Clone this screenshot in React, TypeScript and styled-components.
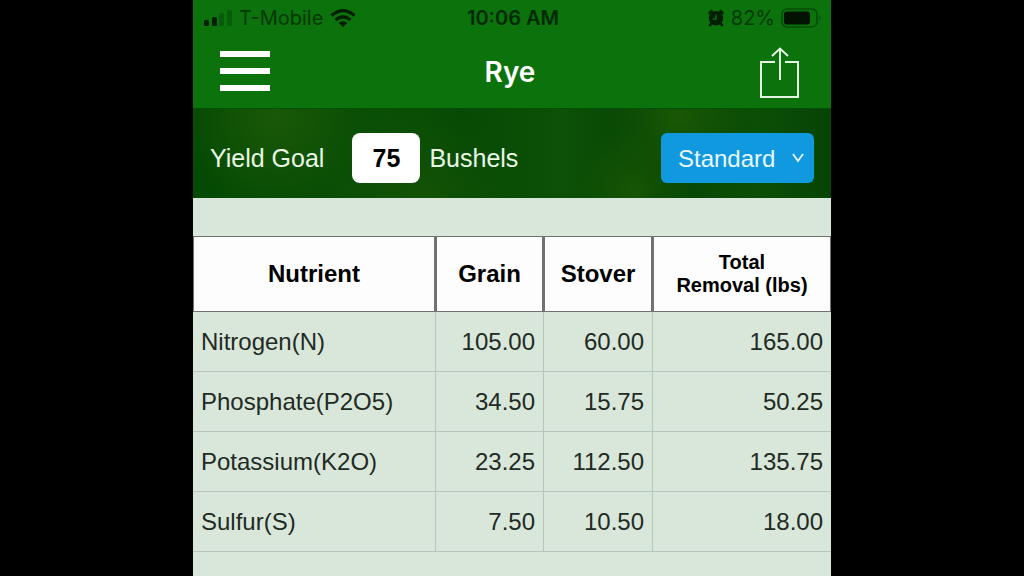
import React, { useState } from 'react';
import styled, { createGlobalStyle } from 'styled-components';

const GlobalStyle = createGlobalStyle`
  * { box-sizing: border-box; }
  body {
    margin: 0;
    background: #000;
    font-family: "Liberation Sans", Arial, sans-serif;
  }
`;

const Screen = styled.div`
  max-width: 638px;
  min-height: 100vh;
  margin: 0 auto;
  background: #d9e7db;
`;

const Header = styled.header`
  background: #0b720c;
  border-bottom: 1px solid #04500a;
  color: #fff;
`;

const StatusBar = styled.div`
  display: grid;
  grid-template-columns: 1fr auto 1fr;
  align-items: center;
  height: 36px;
  padding: 0 9px 0 11px;
  font-family: Inter, sans-serif;
  font-size: 20px;
  line-height: 24px;
  color: #043806;
`;

const StatusGroup = styled.div<{ $end?: boolean }>`
  display: flex;
  align-items: center;
  gap: ${(p) => (p.$end ? 6 : 7)}px;
  justify-content: ${(p) => (p.$end ? 'flex-end' : 'flex-start')};
`;

const Clock = styled.time`
  font-weight: 600;
  color: #032a05;
`;

const TitleBar = styled.div`
  display: grid;
  grid-template-columns: 1fr auto 1fr;
  align-items: center;
  height: 72px;
  padding: 0 31px 0 27px;
`;

const Title = styled.h1`
  margin: 0;
  font-family: Inter, sans-serif;
  font-size: 28px;
  line-height: 32px;
  font-weight: 600;
`;

const IconButton = styled.button<{ $end?: boolean }>`
  display: flex;
  padding: 0;
  border: 0;
  background: none;
  color: #fff;
  justify-self: ${(p) => (p.$end ? 'end' : 'start')};
`;

const GoalBar = styled.form`
  display: flex;
  align-items: center;
  padding: 24px 17px 15px;
  font-size: 25px;
  line-height: 32px;
  color: #e9f8e4;
  background:
    radial-gradient(circle at 13% 10%, #1a5807 0, transparent 90px),
    radial-gradient(circle at 76% 10%, #1a5805 0, transparent 70px),
    radial-gradient(circle at 69% 90%, #175504 0, transparent 60px),
    radial-gradient(circle at 36% 110%, #145206 0, transparent 100px),
    linear-gradient(90deg, #054a04, #0a4f06 30%, #064a05 42%, #0d5007 58%, #054405 72%, #0c4e06 88%, #064405);
`;

const GoalLabel = styled.label`
  margin-right: 28px;
`;

const GoalInput = styled.input`
  width: 68px;
  height: 50px;
  margin-right: 9px;
  padding: 0;
  border: 0;
  border-radius: 8px;
  background: #fff;
  color: #000;
  font: bold 25px "Liberation Sans", Arial, sans-serif;
  text-align: center;
`;

const SelectBox = styled.div`
  display: grid;
  align-items: center;
  margin-left: auto;

  > * { grid-area: 1 / 1; }
  > svg {
    justify-self: end;
    margin-right: 10px;
    pointer-events: none;
  }
`;

const Select = styled.select`
  appearance: none;
  width: 153px;
  height: 50px;
  padding: 0 32px 0 17px;
  border: 0;
  border-radius: 6px;
  background: #1199e0;
  color: #e9f8ff;
  font: 24px "Liberation Sans", Arial, sans-serif;
`;

const Table = styled.table`
  width: 100%;
  margin-top: 38px;
  table-layout: fixed;
  border-collapse: separate;
  border-spacing: 0;
  font-size: 24px;
  line-height: 28px;
  color: #222a24;
`;

const Col = styled.col<{ $width?: number }>`
  width: ${(p) => (p.$width ? `${p.$width}px` : 'auto')};
`;

const HeadCell = styled.th<{ $small?: boolean }>`
  height: 76px;
  padding: 0;
  border: 1px solid #707270;
  background: #fdfdfd;
  color: #000;
  font-size: ${(p) => (p.$small ? 20 : 24)}px;
  line-height: ${(p) => (p.$small ? 23 : 28)}px;

  & + & { border-left-width: 2px; }
`;

const NameCell = styled.th`
  height: 60px;
  padding: 1px 8px 0;
  border-bottom: 1px solid #b7c6ba;
  font-weight: normal;
  text-align: left;
`;

const ValueCell = styled.td`
  padding: 1px 8px 0 0;
  border-left: 1px solid #b7c6ba;
  border-bottom: 1px solid #b7c6ba;
  text-align: right;
`;

const SignalIcon = () => (
  <svg width="28" height="18" viewBox="0 0 28 18" aria-hidden="true">
    <rect x="0" y="11" width="5" height="6" rx="1.5" fill="#021e03" />
    <rect x="8" y="8" width="5" height="9" rx="1.5" fill="#021e03" />
    <rect x="15" y="4" width="5" height="13" rx="1.5" fill="#085b0a" />
    <rect x="23" y="1" width="5" height="16" rx="1.5" fill="#085b0a" />
  </svg>
);

const WifiIcon = () => (
  <svg width="26" height="18" viewBox="0 0 26 18" aria-hidden="true">
    <g fill="none" stroke="#021e03" strokeWidth="3.2">
      <path d="M1.5 6.5Q13-3.5 24.5 6.5" />
      <path d="M5.5 11Q13 4.5 20.5 11" />
    </g>
    <path d="M8.8 14Q13 10.2 17.2 14L13 18Z" fill="#021e03" />
  </svg>
);

const AlarmIcon = () => (
  <svg width="18" height="18" viewBox="0 0 18 18" aria-hidden="true">
    <path
      d="M2.5 4L4.5 2.2M15.5 4L13.5 2.2M4 15L3 16M14 15L15 16"
      stroke="#021e03"
      strokeWidth="2.6"
      strokeLinecap="round"
    />
    <circle cx="9" cy="9.3" r="7.2" fill="#021e03" />
    <path d="M9 5.500V10H5.5" fill="none" stroke="#0b720c" strokeWidth="1.3" />
  </svg>
);

const BatteryIcon = () => (
  <svg width="41" height="20" viewBox="0 0 41 20" aria-hidden="true">
    <rect x="1" y="1" width="35" height="18" rx="5" fill="none" stroke="#064c08" strokeWidth="1.6" />
    <rect x="3" y="3.5" width="26" height="13" rx="3" fill="#021203" />
    <path d="M38.5 7Q41 10 38.5 13Z" fill="#064c08" />
  </svg>
);

const MenuIcon = () => (
  <svg width="50" height="42" viewBox="0 0 50 42" aria-hidden="true">
    <path d="M0 3H50M0 20H50M0 37H50" stroke="#fff" strokeWidth="6" />
  </svg>
);

const ShareIcon = () => (
  <svg width="40" height="52" viewBox="0 0 40 52" fill="none" stroke="#e4f5e2" strokeWidth="2" aria-hidden="true">
    <path d="M15 16H1V51H38V16H25" />
    <path d="M20 34V3M12 10L20 2.5L28 10" />
  </svg>
);

const ChevronIcon = () => (
  <svg width="12" height="10" viewBox="0 0 12 10" fill="none" stroke="#e9f8ff" strokeWidth="1.8" aria-hidden="true">
    <path d="M1 1L6 8L11 1" />
  </svg>
);

const rows = [
  { name: 'Nitrogen(N)', grain: '105.00', stover: '60.00', total: '165.00' },
  { name: 'Phosphate(P2O5)', grain: '34.50', stover: '15.75', total: '50.25' },
  { name: 'Potassium(K2O)', grain: '23.25', stover: '112.50', total: '135.75' },
  { name: 'Sulfur(S)', grain: '7.50', stover: '10.50', total: '18.00' },
];

export default function App() {
  const [goal, setGoal] = useState('75');

  return (
    <>
      <GlobalStyle />
      <Screen>
        <Header>
          <StatusBar>
            <StatusGroup>
              <SignalIcon />
              <span>T-Mobile</span>
              <WifiIcon />
            </StatusGroup>
            <Clock>10:06 AM</Clock>
            <StatusGroup $end>
              <AlarmIcon />
              <span>82%</span>
              <BatteryIcon />
            </StatusGroup>
          </StatusBar>
          <TitleBar>
            <IconButton type="button" aria-label="Menu"><MenuIcon /></IconButton>
            <Title>Rye</Title>
            <IconButton type="button" aria-label="Share" $end><ShareIcon /></IconButton>
          </TitleBar>
        </Header>
        <main>
          <GoalBar>
            <GoalLabel htmlFor="goal">Yield Goal</GoalLabel>
            <GoalInput id="goal" inputMode="numeric" value={goal} onChange={(e) => setGoal(e.target.value)} />
            <span>Bushels</span>
            <SelectBox>
              <Select aria-label="Units" defaultValue="Standard">
                <option>Standard</option>
                <option>Metric</option>
              </Select>
              <ChevronIcon />
            </SelectBox>
          </GoalBar>
          <Table>
            <colgroup>
              <Col $width={242} />
              <Col $width={108} />
              <Col $width={109} />
              <Col />
            </colgroup>
            <thead>
              <tr>
                <HeadCell scope="col">Nutrient</HeadCell>
                <HeadCell scope="col">Grain</HeadCell>
                <HeadCell scope="col">Stover</HeadCell>
                <HeadCell scope="col" $small>Total<br />Removal (lbs)</HeadCell>
              </tr>
            </thead>
            <tbody>
              {rows.map((row) => (
                <tr key={row.name}>
                  <NameCell scope="row">{row.name}</NameCell>
                  <ValueCell>{row.grain}</ValueCell>
                  <ValueCell>{row.stover}</ValueCell>
                  <ValueCell>{row.total}</ValueCell>
                </tr>
              ))}
            </tbody>
          </Table>
        </main>
      </Screen>
    </>
  );
}
